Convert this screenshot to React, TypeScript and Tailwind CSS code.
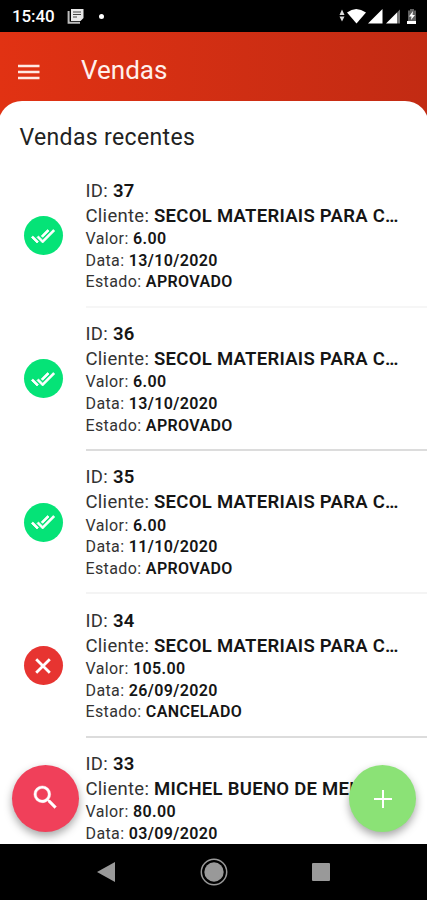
import React from "react";

type Status = "APROVADO" | "CANCELADO";

interface Sale {
  id: number;
  client: string;
  value: string;
  date: string;
  status?: Status;
  line: string;
}

const sales: Sale[] = [
  { id: 37, client: "SECOL MATERIAIS PARA C…", value: "6.00", date: "13/10/2020", status: "APROVADO", line: "border-[#f6f6f6]" },
  { id: 36, client: "SECOL MATERIAIS PARA C…", value: "6.00", date: "13/10/2020", status: "APROVADO", line: "border-[#dcdcdc]" },
  { id: 35, client: "SECOL MATERIAIS PARA C…", value: "6.00", date: "11/10/2020", status: "APROVADO", line: "border-[#f4f4f4]" },
  { id: 34, client: "SECOL MATERIAIS PARA C…", value: "105.00", date: "26/09/2020", status: "CANCELADO", line: "border-[#dcdcdc]" },
  { id: 33, client: "MICHEL BUENO DE MELO", value: "80.00", date: "03/09/2020", line: "border-[#f6f6f6]" },
];

function StatusBar() {
  return (
    <header className="flex h-8 shrink-0 items-center bg-black pl-[12px] pr-[10px] text-white">
      <span className="w-[55px] pt-px text-[17px] font-medium leading-none tracking-[-0.1px]">15:40</span>
      <svg width="18" height="17" viewBox="0 0 18 17">
        <path d="M4 1h12.500v9l-3 3H4z" fill="#e8e8e8" />
        <path d="M1.600 3v11.800H13" fill="none" stroke="#bdbdbd" strokeWidth="2" />
        <path d="M6 4h8M6 6.500h8M6 9h4" stroke="#444" strokeWidth="1" />
      </svg>
      <span className="ml-[14px] h-[5px] w-[5px] rounded-full bg-white" />
      <svg className="ml-auto" width="78" height="18" viewBox="0 0 78 18">
        <path d="M.5 8 3 2.500 5.500 8zM.5 9.500h5L3 14.500z" fill="#ddd" />
        <path d="M8 5.500Q17 -1.500 27 5.500L17.500 16.500z" fill="#fff" />
        <path d="M29 16.500 43.500 2v14.500z" fill="#fff" />
        <path d="M47 16.500 58 5.500v11z" fill="#fff" />
        <path d="M58 5.500 61 2.500v14h-3z" fill="#777" />
        <path d="M69 3.500h2V2h4v1.500h2V14h-8z" fill="#606060" />
        <path d="M68 14h9v3h-9z" fill="#fff" />
        <path d="M74 4 70 9.500h2.500L72 13l4-5h-2.500z" fill="#fff" />
      </svg>
    </header>
  );
}

function StatusIcon({ status }: { status: Status }) {
  return status === "APROVADO" ? (
    <span className="flex h-[39px] w-[39px] items-center justify-center rounded-full bg-[#05e377]">
      <svg width="24" height="24" viewBox="0 0 24 24" fill="#fff" stroke="#fff" strokeWidth="0.800">
        <path d="m18 7-1.410-1.410-6.340 6.340 1.410 1.410L18 7zm4.240-1.410L11.660 16.170 7.480 12l-1.410 1.410L11.660 19l12-12-1.420-1.410zM.41 13.410 6 19l1.410-1.410L1.830 12 .41 13.410z" />
      </svg>
    </span>
  ) : (
    <span className="flex h-[39px] w-[39px] items-center justify-center rounded-full bg-[#e73431]">
      <svg width="16" height="16" viewBox="0 0 16 16">
        <path d="m1.200 1.200 13.600 13.600m0-13.600-13.600 13.600" stroke="#fff" strokeWidth="2.800" />
      </svg>
    </span>
  );
}

function Field({ label, value }: { label: string; value: string | number }) {
  return (
    <p>
      {label}: <b className="font-semibold text-[#151515]">{value}</b>
    </p>
  );
}

function SaleRow({ sale }: { sale: Sale }) {
  return (
    <li className="flex h-[143.300px] shrink-0">
      <div className="flex w-[85.500px] shrink-0 items-center pl-[23.500px] pb-px">
        {sale.status && <StatusIcon status={sale.status} />}
      </div>
      <div className={"min-w-0 flex-1 whitespace-nowrap border-b-2 pt-[14.200px] text-[#333] " + sale.line}>
        <div className="text-[18.500px] leading-[25px] tracking-[0.280px]">
          <Field label="ID" value={sale.id} />
          <Field label="Cliente" value={sale.client} />
        </div>
        <div className="-mt-[0.700px] text-[16px] leading-[21.700px] tracking-[0.380px]">
          <Field label="Valor" value={sale.value} />
          <Field label="Data" value={sale.date} />
          {sale.status && <Field label="Estado" value={sale.status} />}
        </div>
      </div>
    </li>
  );
}

export default function App() {
  return (
    <div className="relative flex h-[900px] w-[427px] flex-col overflow-hidden bg-white font-['Roboto',sans-serif]">
      <StatusBar />
      <main className="flex min-h-0 flex-1 flex-col overflow-hidden bg-linear-to-r from-[#e13213] to-[#c22b13]">
        <div className="flex h-[68.500px] shrink-0 items-center pl-[18px] pt-[7px]">
          <svg className="mt-[4px]" width="22" height="16" viewBox="0 0 22 16">
            <path d="M0 2h21.500M0 8h21.500M0 14h21.500" stroke="#ffe9e3" strokeWidth="2.300" />
          </svg>
          <h1 className="ml-[41px] text-[26px] leading-8 text-[#fff0ec]">Vendas</h1>
        </div>
        <section className="-mx-[2px] flex min-h-0 flex-1 flex-col overflow-hidden rounded-t-[24px] bg-white px-[2px]">
          <h2 className="h-[64px] shrink-0 pl-[19.500px] pt-[21.500px] text-[23px] leading-8 tracking-[0.350px] text-[#222]">Vendas recentes</h2>
          <ul className="flex flex-col">
            {sales.map((sale) => (
              <SaleRow key={sale.id} sale={sale} />
            ))}
          </ul>
        </section>
      </main>
      <nav className="flex h-14 shrink-0 items-center justify-between bg-black pl-[96px] pr-[97px]">
        <svg width="19" height="20" viewBox="0 0 19 20">
          <path d="M1 10 19 0v20z" fill="#999" />
        </svg>
        <svg width="28" height="28" viewBox="0 0 28 28">
          <circle cx="14" cy="14" r="12.700" fill="none" stroke="#999" strokeWidth="1.500" />
          <circle cx="14" cy="14" r="9.700" fill="#999" />
        </svg>
        <span className="h-[18px] w-[18px] rounded-[1px] bg-[#999]" />
      </nav>
      <button aria-label="Buscar" className="absolute left-[12px] top-[765px] flex h-[67px] w-[67px] items-center justify-center rounded-full bg-[#f0405a] shadow-[0_4px_8px_rgba(0,0,0,0.35)]">
        <svg className="-mt-[2px] -ml-px" width="31" height="31" viewBox="0 0 24 24" fill="#fff" stroke="#fff" strokeWidth="0.300">
          <path d="M15.500 14h-.79l-.28-.27A6.471 6.471 0 0 0 16 9.500 6.500 6.500 0 1 0 9.500 16c1.610 0 3.090-.59 4.230-1.570l.27.28v.79l5 4.990L20.490 19l-4.990-5zm-6 0C7.010 14 5 11.990 5 9.500S7.010 5 9.500 5 14 7.010 14 9.500 11.990 14 9.500 14z" />
        </svg>
      </button>
      <button aria-label="Adicionar" className="absolute left-[349px] top-[765px] flex h-[67px] w-[67px] items-center justify-center rounded-full bg-[#8be276] shadow-[0_4px_8px_rgba(0,0,0,0.35)]">
        <svg width="18" height="18" viewBox="0 0 18 18">
          <path d="M9 0v18M0 9h18" stroke="#fff" strokeWidth="2" />
        </svg>
      </button>
    </div>
  );
}
